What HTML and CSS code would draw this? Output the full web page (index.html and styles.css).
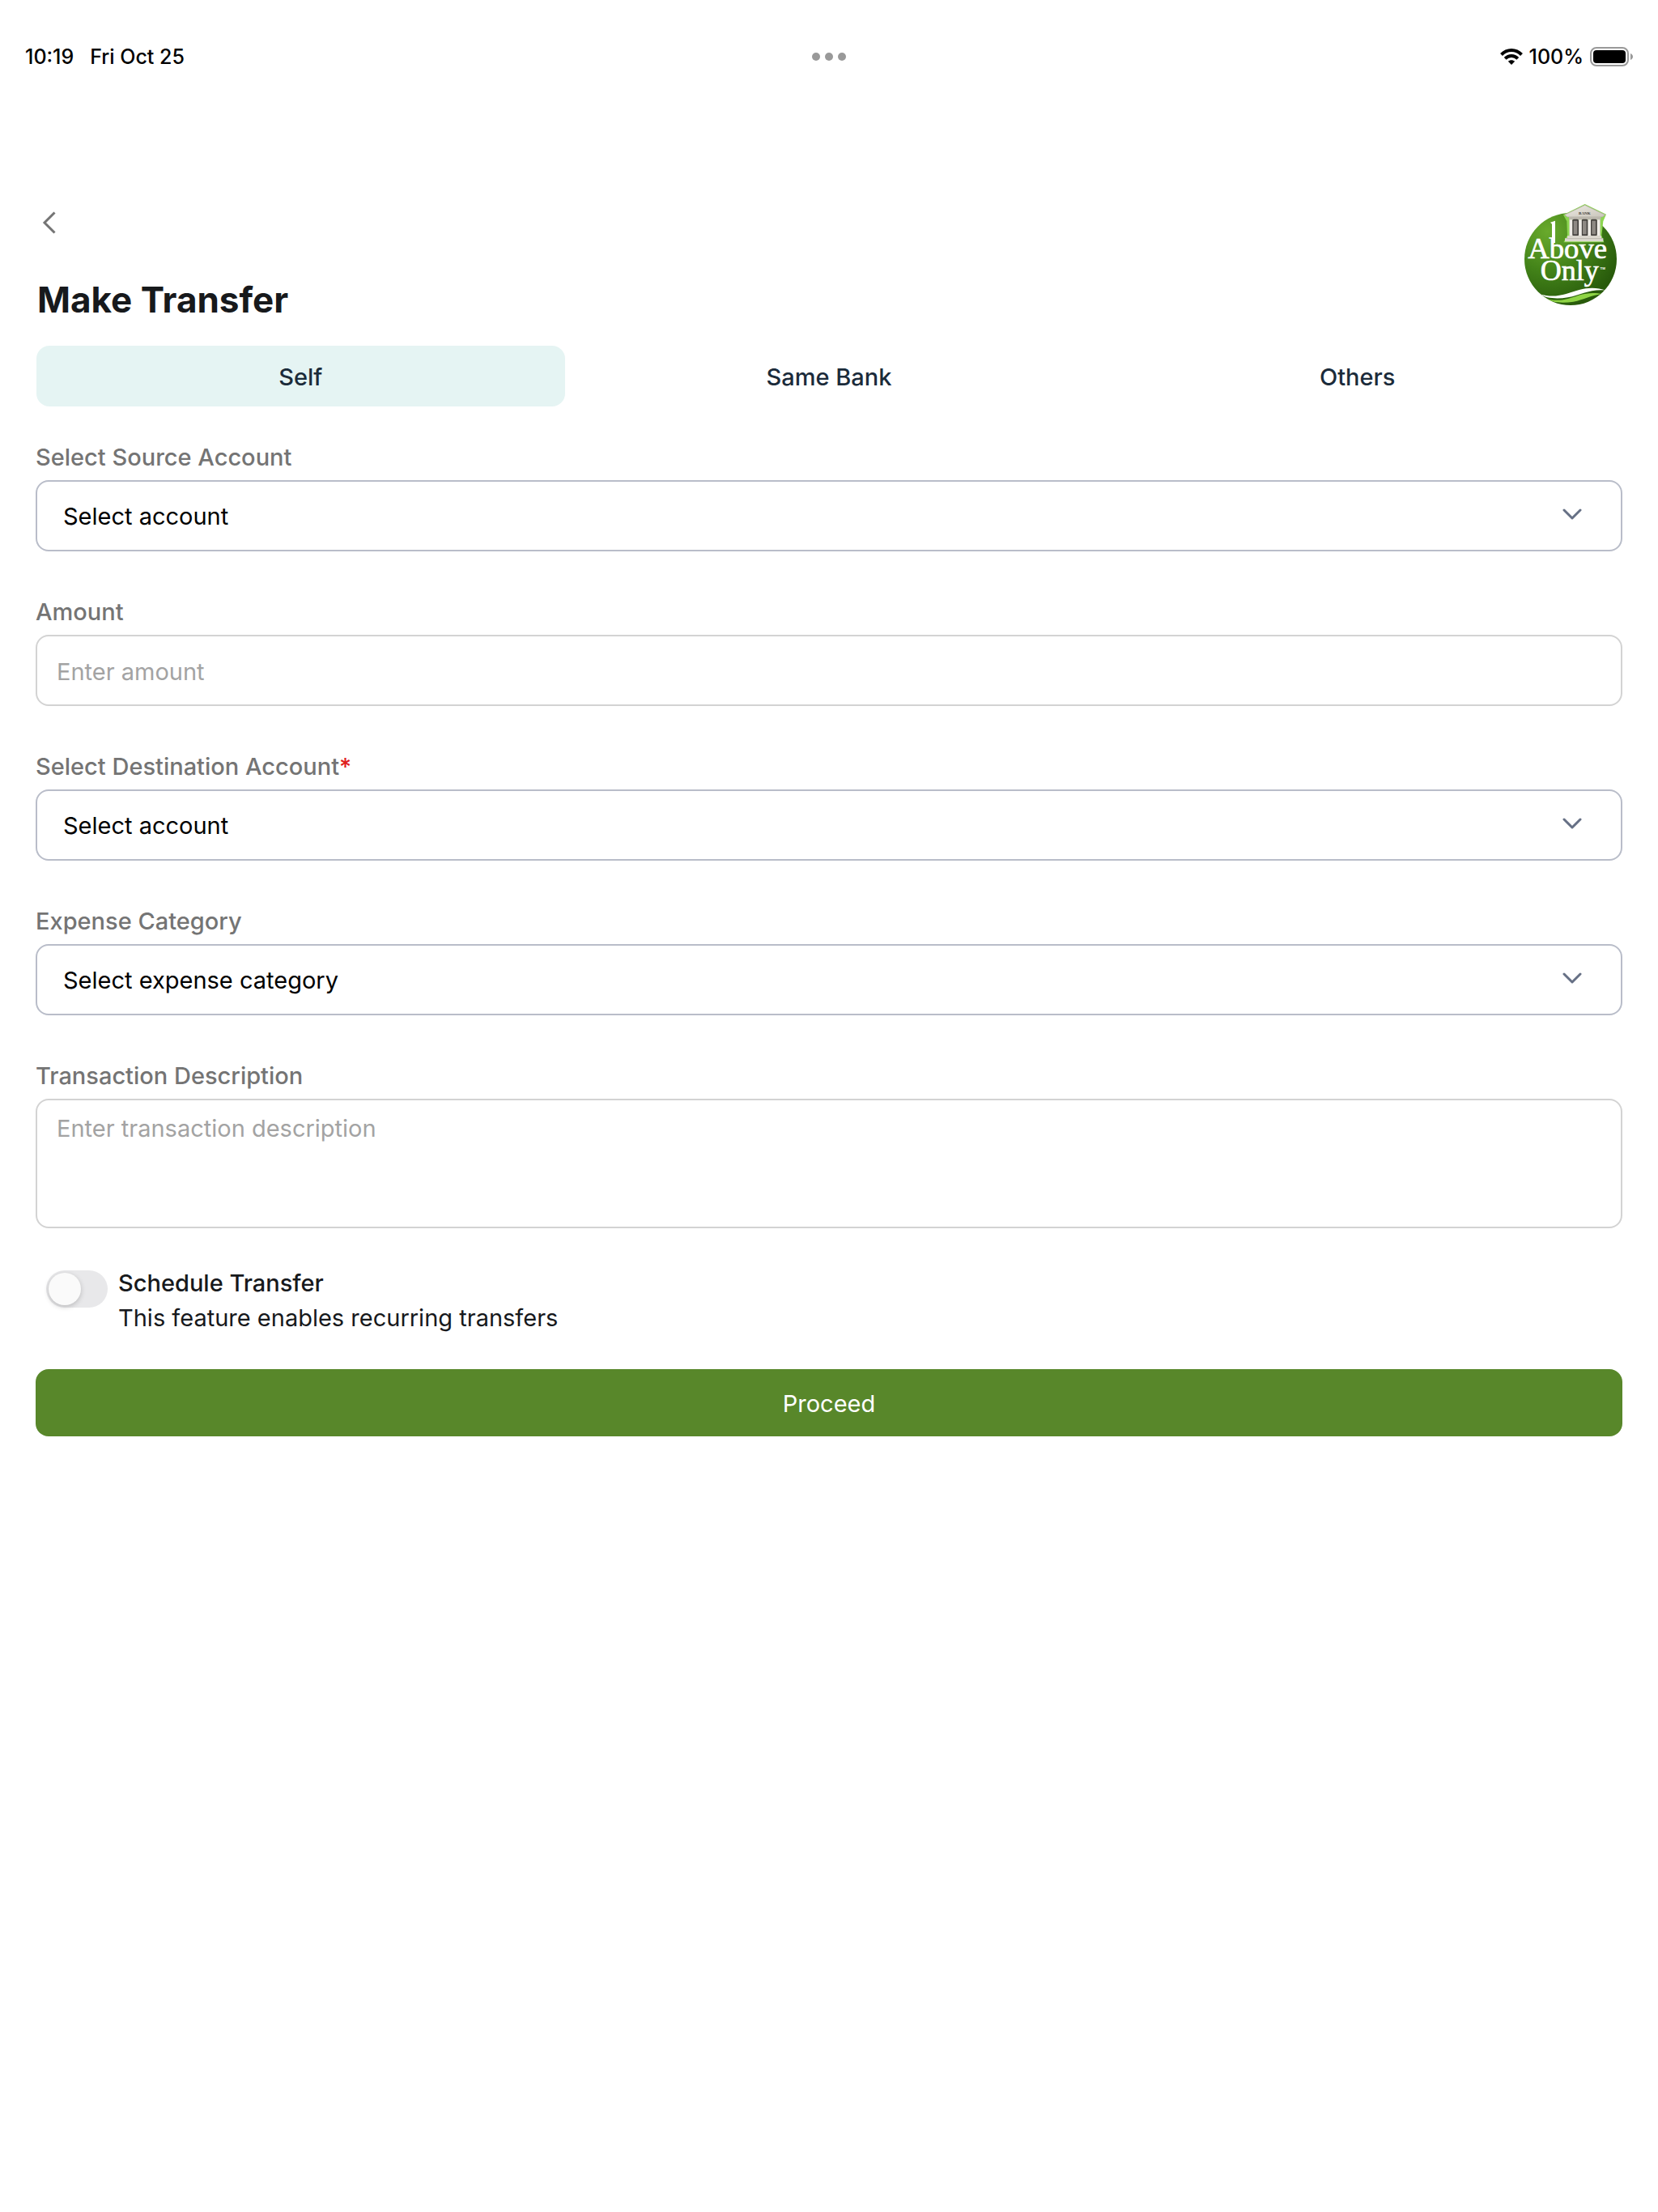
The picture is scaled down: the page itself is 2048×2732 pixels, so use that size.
FILE: index.html
```html
<!DOCTYPE html>
<html lang="en">
<head>
    <meta charset="UTF-8">
    <meta name="viewport" content="width=device-width, initial-scale=1.0">
    <title>Make Transfer</title>
    <link rel="stylesheet" href="styles.css">
</head>
<body>
    <!-- Status bar -->
    <div class="status-bar">
        <div class="status-left">
            <span>10:19</span>
            <span>Fri Oct 25</span>
        </div>
        <div class="status-dots">
            <span class="dot"></span>
            <span class="dot"></span>
            <span class="dot"></span>
        </div>
        <div class="status-right">
            <svg class="wifi" width="28" height="20" viewBox="0 0 28 20" fill="none" stroke="#000" stroke-width="4">
                <path d="M1.500 7.500 C8.500 0.300 19.500 0.300 26.500 7.500"/>
                <path d="M6.200 12.300 C10.500 8 17.500 8 21.800 12.300"/>
                <path d="M14 20 L9.800 15.800 C12 13.600 16 13.600 18.200 15.800 Z" fill="#000" stroke="none"/>
            </svg>
            <span>100%</span>
            <svg class="battery" width="54" height="24" viewBox="0 0 54 24">
                <rect x="1" y="1" width="46" height="22" rx="7" fill="none" stroke="#999" stroke-width="2"/>
                <rect x="4" y="4" width="40" height="16" rx="4" fill="#000"/>
                <path d="M50 8 C54 9.500 54 14.500 50 16 Z" fill="#999"/>
            </svg>
        </div>
    </div>

    <div class="main-container">
        <header class="header">
            <div class="header-left">
                <button type="button" class="back-btn" aria-label="Back">
                    <svg width="18" height="28" viewBox="0 0 18 28" fill="none" stroke="#747474" stroke-width="3">
                        <path d="M15.500 1.500 L3 14 L15.500 26.500"/>
                    </svg>
                </button>
                <h1>Make Transfer</h1>
            </div>
            <svg class="logo" width="115" height="126" viewBox="69 36 345 378" role="img" aria-label="Above Only Bank">
                <defs>
                    <radialGradient id="green" cx="0.25" cy="0.2" r="0.85">
                        <stop offset="0" stop-color="#69aa2c"/>
                        <stop offset="0.5" stop-color="#438319"/>
                        <stop offset="1" stop-color="#285a0b"/>
                    </radialGradient>
                    <linearGradient id="stone" x1="0" y1="0" x2="1" y2="1">
                        <stop offset="0" stop-color="#edeae3"/>
                        <stop offset="1" stop-color="#c9c5bb"/>
                    </linearGradient>
                    <clipPath id="disc"><circle cx="240" cy="240" r="171"/></clipPath>
                </defs>
                <circle cx="240" cy="240" r="171" fill="url(#green)"/>
                <!-- waves -->
                <g clip-path="url(#disc)">
                    <path d="M125 370 C190 388 225 366 272 354 C310 344 340 346 372 356 C310 350 280 374 230 382 C190 389 150 386 125 370 Z" fill="#fff"/>
                    <path d="M142 384 C190 402 230 388 270 374 C305 364 330 364 360 370 C315 372 290 392 250 398 C210 404 170 402 142 384 Z" fill="#8fd445"/>
                </g>
                <!-- bank building -->
                <path d="M213 76 L293 36 L372 74 L361 100 L355 152 L364 178 L214 178 L228 152 L226 100 Z" fill="#8dd651"/>
                <path d="M218 76 L293 40 L368 76 L358 84 L228 84 Z" fill="url(#stone)" stroke="#aaa69c" stroke-width="2"/>
                <rect x="234" y="84" width="118" height="10" fill="#bbb7ad"/>
                <rect x="236" y="94" width="114" height="62" fill="#c4c0b7"/>
                <g fill="#45423e">
                    <rect x="247" y="92" width="23" height="62" rx="5"/>
                    <rect x="281" y="92" width="23" height="62" rx="5"/>
                    <rect x="315" y="92" width="23" height="62" rx="5"/>
                </g>
                <g fill="#8e8983">
                    <rect x="251" y="98" width="14" height="50"/>
                    <rect x="285" y="98" width="14" height="50"/>
                    <rect x="319" y="98" width="14" height="50"/>
                </g>
                <g fill="#f0ede7">
                    <rect x="236" y="94" width="10" height="60"/>
                    <rect x="271" y="94" width="10" height="60"/>
                    <rect x="305" y="94" width="10" height="60"/>
                    <rect x="339" y="94" width="10" height="60"/>
                </g>
                <path d="M228 154 H354 V163 H361 V175 H219 V163 H228 Z" fill="#ddd9d0"/>
                <path d="M226 164 H358" stroke="#aba79d" stroke-width="2"/>
                <text x="292" y="74" class="logo-bank">BANK</text>
                <!-- the tall stem rises above the wordmark -->
                <path d="M165 104 L183 98 V180 H171 V110 Z" fill="#fff"/>
                <text class="logo-word">
                    <tspan x="232" y="236" class="logo-above">Above</tspan>
                    <tspan x="236" y="319" class="logo-only">Only</tspan>
                </text>
                <text x="359" y="278" class="logo-tm">TM</text>
            </svg>
        </header>

        <div class="tabs" role="tablist">
            <button type="button" class="tab active" role="tab" aria-selected="true">Self</button>
            <button type="button" class="tab" role="tab" aria-selected="false">Same Bank</button>
            <button type="button" class="tab" role="tab" aria-selected="false">Others</button>
        </div>

        <form id="transferForm">
            <div class="field">
                <label for="source">Select Source Account</label>
                <div class="select-box">
                    <select id="source" name="source">
                        <option>Select account</option>
                    </select>
                    <svg class="arrow" width="24" height="14" viewBox="0 0 24 14"><path d="M2 2 L12 12 L22 2"/></svg>
                </div>
            </div>
            <div class="field">
                <label for="amount">Amount</label>
                <input type="text" id="amount" name="amount" placeholder="Enter amount">
            </div>
            <div class="field">
                <label for="destination">Select Destination Account<span class="required">*</span></label>
                <div class="select-box">
                    <select id="destination" name="destination">
                        <option>Select account</option>
                    </select>
                    <svg class="arrow" width="24" height="14" viewBox="0 0 24 14"><path d="M2 2 L12 12 L22 2"/></svg>
                </div>
            </div>
            <div class="field">
                <label for="category">Expense Category</label>
                <div class="select-box">
                    <select id="category" name="category">
                        <option>Select expense category</option>
                    </select>
                    <svg class="arrow" width="24" height="14" viewBox="0 0 24 14"><path d="M2 2 L12 12 L22 2"/></svg>
                </div>
            </div>
            <div class="field">
                <label for="description">Transaction Description</label>
                <textarea id="description" name="description" placeholder="Enter transaction description"></textarea>
            </div>

            <div class="schedule">
                <input type="checkbox" id="schedule" name="schedule" class="toggle" role="switch">
                <label for="schedule" class="schedule-label">
                    <span class="schedule-title">Schedule Transfer</span>
                    <span>This feature enables recurring transfers</span>
                </label>
            </div>

            <button type="submit" class="proceed-btn">Proceed</button>
        </form>
    </div>
</body>
</html>
```
FILE: styles.css
```css
* {
    box-sizing: border-box;
}

body {
    font-family: Inter, "Liberation Sans", sans-serif;
    font-size: 29px;
    background: #fff;
    color: #17191c;
    margin: 0;
}

button, input, select, textarea {
    font: inherit;
    margin: 0;
}

/* Status bar */
.status-bar {
    display: grid;
    grid-template-columns: 1fr auto 1fr;
    align-items: center;
    padding: 52px 30px 0;
    font-size: 25px;
    font-weight: 500;
    line-height: 36px;
    color: #000;
}

.status-left {
    display: flex;
    gap: 20px;
    padding-left: 1px;
}

.status-dots {
    display: flex;
    gap: 6px;
}

.dot {
    width: 10px;
    height: 10px;
    border-radius: 50%;
    background: #999;
}

.status-right {
    display: flex;
    justify-content: flex-end;
    align-items: center;
    gap: 8px;
}

/* Page content */
.main-container {
    padding: 164px 44px 0;
}

.header {
    display: flex;
    justify-content: space-between;
    align-items: flex-start;
    padding: 0 6px 0 2px;
}

.header-left {
    padding-top: 9px;
}

.back-btn {
    display: block;
    padding: 0 6px;
    border: none;
    background: none;
    cursor: pointer;
}

.back-btn svg {
    display: block;
}

h1 {
    margin: 56px 0 32px;
    font-size: 44px;
    font-weight: 700;
    line-height: 50px;
}

/* Logo lettering */
.logo-word {
    font-family: "Liberation Serif", serif;
    fill: #fff;
    stroke: #fff;
    stroke-width: 2px;
    text-anchor: middle;
}

.logo-above {
    font-size: 110px;
}

.logo-only {
    font-size: 108px;
}

.logo-bank {
    font-family: "Liberation Serif", serif;
    font-size: 15px;
    font-weight: bold;
    fill: #3a3733;
    text-anchor: middle;
}

.logo-tm {
    font-family: "Liberation Sans", sans-serif;
    font-size: 13px;
    font-weight: bold;
    fill: #fff;
    text-anchor: middle;
}

/* Tabs */
.tabs {
    display: flex;
    padding: 0 1px;
}

.tab {
    flex: 1;
    padding: 21px 20px 19px;
    border: none;
    border-radius: 16px;
    background: none;
    color: #1b2b3a;
    font-weight: 500;
    line-height: 35px;
    cursor: pointer;
}

.tab.active {
    background: #e5f4f3;
}

/* Form */
form {
    display: flex;
    flex-direction: column;
    gap: 56px;
    margin-top: 44px;
}

.field {
    display: flex;
    flex-direction: column;
    gap: 9px;
}

.field label {
    color: #747474;
    font-weight: 500;
    line-height: 38px;
}

.required {
    color: #e02020;
}

.field input, .field select, .field textarea {
    display: block;
    width: 100%;
    height: 88px;
    border: 2px solid #d3d3d3;
    border-radius: 16px;
    background: #fff;
    color: #000;
    padding: 2px 24px 0;
}

.field ::placeholder {
    color: #a3a3a3;
    opacity: 1;
}

.select-box {
    position: relative;
}

.field select {
    appearance: none;
    border-color: #b9bdc9;
    padding: 0 32px;
}

.arrow {
    position: absolute;
    right: 50px;
    top: 35px;
    fill: none;
    stroke: #667085;
    stroke-width: 3;
    stroke-linecap: round;
    stroke-linejoin: round;
    pointer-events: none;
}

.field textarea {
    height: 160px;
    padding: 16px 24px;
    line-height: 38px;
    resize: none;
}

/* Schedule switch */
.schedule {
    display: flex;
    align-items: flex-start;
    gap: 13px;
    margin: -12px 0 -14px;
    padding-left: 13px;
}

.toggle {
    appearance: none;
    display: flex;
    flex-shrink: 0;
    width: 76px;
    height: 46px;
    margin-top: 8px;
    padding: 3px;
    border-radius: 23px;
    background: #e8e8ea;
    cursor: pointer;
}

.toggle::before {
    content: "";
    width: 40px;
    height: 40px;
    border-radius: 50%;
    background: #fafafa;
    box-shadow: 0 2px 6px rgba(0, 0, 0, 0.2);
}

.toggle:checked {
    justify-content: flex-end;
    background: #58872a;
}

.schedule-label {
    display: flex;
    flex-direction: column;
    padding-top: 2px;
    line-height: 43px;
}

.schedule-title {
    font-weight: 500;
}

.proceed-btn {
    padding: 24px 23px 22px;
    border: none;
    border-radius: 16px;
    background: #58872a;
    color: #fff;
    line-height: 37px;
    cursor: pointer;
}
```
